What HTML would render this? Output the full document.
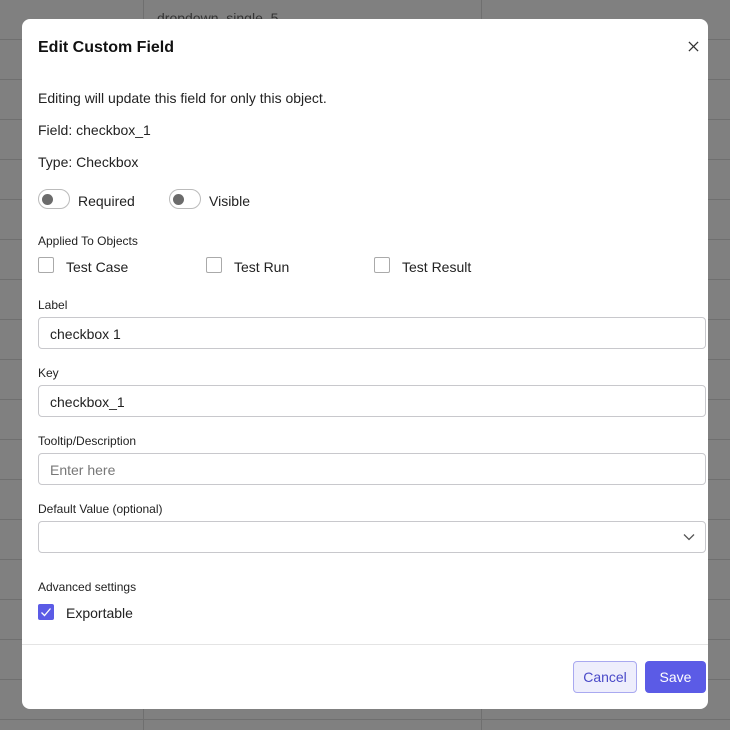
<!DOCTYPE html>
<html><head><style>
*{box-sizing:border-box;margin:0;padding:0}
body{width:730px;height:730px;overflow:hidden;background:#808080;font-family:"Liberation Sans",sans-serif;position:relative;color:#1f2328}
.hl{position:absolute;left:0;width:730px;height:1px;background:#6f6f6f}
.vl{position:absolute;top:0;height:730px;width:1px;background:#6f6f6f}
.modal{position:absolute;left:22px;top:19px;width:686px;height:690px;background:#fff;border-radius:8px}
.a{position:absolute}
.t{font-size:14px;color:#222}
.lbl{font-size:12px;color:#222}
.inp{position:absolute;left:16px;width:668px;height:32px;border:1px solid #c8c8cc;border-radius:4px;font-size:14px;padding:8px 11px;color:#222}
.tg{position:absolute;width:32px;height:20px;border:1px solid #bbb;border-radius:10px}
.tg:after{content:"";position:absolute;left:3px;top:4px;width:11px;height:11px;border-radius:50%;background:#6b6b6b}
.cb{position:absolute;width:16px;height:16px;border:1px solid #aaa;border-radius:2px}
</style></head><body>
<div class="hl" style="top:39px"></div><div class="hl" style="top:79px"></div><div class="hl" style="top:119px"></div><div class="hl" style="top:159px"></div><div class="hl" style="top:199px"></div><div class="hl" style="top:239px"></div><div class="hl" style="top:279px"></div><div class="hl" style="top:319px"></div><div class="hl" style="top:359px"></div><div class="hl" style="top:399px"></div><div class="hl" style="top:439px"></div><div class="hl" style="top:479px"></div><div class="hl" style="top:519px"></div><div class="hl" style="top:559px"></div><div class="hl" style="top:599px"></div><div class="hl" style="top:639px"></div><div class="hl" style="top:679px"></div><div class="hl" style="top:719px"></div>
<div class="vl" style="left:143px"></div><div class="vl" style="left:481px"></div>
<div class="a" style="left:157px;top:10px;font-size:14px;color:#333">dropdown_single_5</div>
<div class="modal">
<div class="a" style="left:16px;top:20px;font-size:16px;font-weight:bold;color:#111">Edit Custom Field</div>
<svg class="a" style="left:666px;top:22px" width="11" height="11" viewBox="0 0 12 12"><path d="M1 1L11 11M11 1L1 11" stroke="#333" stroke-width="1.4"/></svg>
<div class="a t" style="left:16px;top:71px">Editing will update this field for only this object.</div>
<div class="a t" style="left:16px;top:103px">Field: checkbox_1</div>
<div class="a t" style="left:16px;top:135px">Type: Checkbox</div>
<div class="tg" style="left:16px;top:170px"></div><div class="a t" style="left:56px;top:174px">Required</div>
<div class="tg" style="left:147px;top:170px"></div><div class="a t" style="left:187px;top:174px">Visible</div>
<div class="a lbl" style="left:16px;top:215px">Applied To Objects</div>
<div class="cb" style="left:16px;top:238px"></div><div class="a t" style="left:44px;top:240px">Test Case</div>
<div class="cb" style="left:184px;top:238px"></div><div class="a t" style="left:212px;top:240px">Test Run</div>
<div class="cb" style="left:352px;top:238px"></div><div class="a t" style="left:380px;top:240px">Test Result</div>
<div class="a lbl" style="left:16px;top:279px">Label</div>
<div class="inp" style="top:298px">checkbox 1</div>
<div class="a lbl" style="left:16px;top:347px">Key</div>
<div class="inp" style="top:366px">checkbox_1</div>
<div class="a lbl" style="left:16px;top:415px">Tooltip/Description</div>
<div class="inp" style="top:434px;color:#777">Enter here</div>
<div class="a lbl" style="left:16px;top:483px">Default Value (optional)</div>
<div class="inp" style="top:502px"></div>
<svg class="a" style="left:661px;top:514px" width="12" height="8" viewBox="0 0 12 8"><path d="M1 1.5L6 6.5L11 1.5" stroke="#555" stroke-width="1.3" fill="none"/></svg>
<div class="a lbl" style="left:16px;top:561px">Advanced settings</div>
<div class="a" style="left:16px;top:585px;width:16px;height:16px;background:#5b5be6;border-radius:2px"><svg width="16" height="16" viewBox="0 0 16 16"><path d="M3.5 8.5L6.5 11.5L12.5 4.5" stroke="#fff" stroke-width="1.3" fill="none"/></svg></div>
<div class="a t" style="left:44px;top:586px">Exportable</div>
<div class="a" style="left:0;top:625px;width:686px;height:1px;background:#e4e4e4"></div>
<div class="a" style="left:551px;top:642px;width:64px;height:32px;border:1px solid #a9a9f0;background:#eeeefc;border-radius:4px;color:#4a4ac8;font-size:14px;text-align:center;line-height:30px">Cancel</div>
<div class="a" style="left:623px;top:642px;width:61px;height:32px;background:#5b5be6;border-radius:4px;color:#fff;font-size:14px;text-align:center;line-height:32px">Save</div>
</div>
</body></html>
